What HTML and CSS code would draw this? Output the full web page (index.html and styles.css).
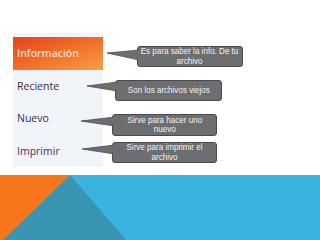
FILE: index.html
```html
<!DOCTYPE html>
<html>
<head>
<meta charset="utf-8">
<link rel="stylesheet" href="styles.css">
</head>
<body>
<div class="slide">
  <div class="content">
    <div class="menu">
      <div class="item active">Información</div>
      <div class="item">Reciente</div>
      <div class="item">Nuevo</div>
      <div class="item purple">Imprimir</div>
    </div>
    <div class="callout c1"><span class="txt">Es para saber la info. De tu<br>archivo</span></div>
    <div class="callout c2"><span class="txt">Son los archivos viejos</span></div>
    <div class="callout c3"><span class="txt">Sirve para hacer uno<br>nuevo</span></div>
    <div class="callout c4"><span class="txt">Sirve para imprimir el<br>archivo</span></div>
    <svg class="tails" width="320" height="175" viewBox="0 0 320 175">
      <g fill="#6d6e71">
        <polygon points="107,53 140,50 140,60"/>
        <polygon points="87,86 118,82 118,91"/>
        <polygon points="81,121 115,117 115,126"/>
        <polygon points="82,149 115,145 115,154"/>
      </g>
      <g fill="none" stroke="#4a4a4c" stroke-width="0.8">
        <polyline points="138,50.2 107,53 138,59.8"/>
        <polyline points="116,82.2 87,86 116,90.8"/>
        <polyline points="113,117.2 81,121 113,125.8"/>
        <polyline points="113,145.2 82,149 113,153.8"/>
      </g>
    </svg>
  </div>
  <svg class="band" width="320" height="65" viewBox="0 0 320 65">
    <rect x="0" y="0" width="320" height="65" fill="#3bb3e0"/>
    <polygon points="70,0 126,65 3,65" fill="#3a95b2"/>
    <polygon points="0,0 70,0 3,65 0,65" fill="#f7761c"/>
  </svg>
</div>
</body>
</html>
```
FILE: styles.css
```css
html, body {
  margin: 0;
  padding: 0;
  background: #ffffff;
}
.slide {
  width: 320px;
  height: 240px;
  display: flex;
  flex-direction: column;
  overflow: hidden;
}
.content {
  position: relative;
  height: 175px;
  flex: none;
}
.menu {
  margin: 33px 0 0 13px;
  width: 90px;
  height: 134px;
  box-sizing: border-box;
  padding-top: 4px;
  background: #f1f4f8;
  display: flex;
  flex-direction: column;
}
.item {
  height: 32.5px;
  display: flex;
  align-items: center;
  padding-left: 4px;
  font-family: "Open Sans", "DejaVu Sans", sans-serif;
  font-size: 10.5px;
  color: #3a2e3a;
}
.item.active {
  background: linear-gradient(160deg, #e5451d 0%, #f06a26 45%, #f7a045 100%);
  color: #f9dccb;
  font-weight: 600;
}
.item.purple {
  color: #5a2a5c;
}
.callout {
  position: absolute;
  box-sizing: border-box;
  background: #6d6e71;
  border: 1px solid #4a4a4c;
  border-radius: 3px;
  color: #f2f2f2;
  font-family: "Liberation Sans", Arial, sans-serif;
  font-size: 9px;
  line-height: 9.5px;
  text-align: center;
  display: flex;
  align-items: center;
  justify-content: center;
}
.txt {
  display: inline-block;
  flex: none;
  white-space: nowrap;
  transform: scaleX(0.895);
}
.c1 { left: 137px; top: 46px; width: 106px; height: 21px; }
.c2 { left: 115px; top: 80px; width: 107px; height: 21px; }
.c3 { left: 112px; top: 114px; width: 105px; height: 22px; }
.c4 { left: 112px; top: 142px; width: 105px; height: 21px; }
.tails {
  position: absolute;
  left: 0;
  top: 0;
}
.band {
  display: block;
  flex: none;
}
```
